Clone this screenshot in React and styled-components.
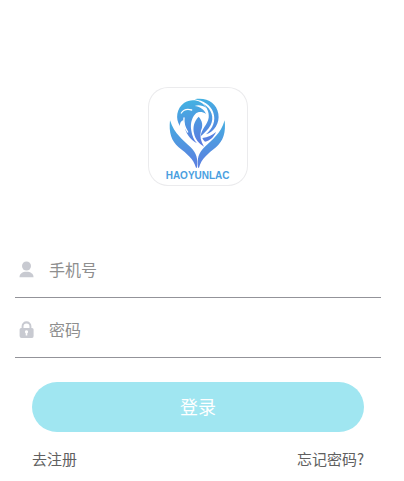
import React from "react";
import styled, { createGlobalStyle } from "styled-components";

const GlobalStyle = createGlobalStyle`
  * {
    box-sizing: border-box;
  }
  body {
    margin: 0;
    background-color: #fff;
    font-family: "Noto Sans CJK SC", sans-serif;
  }
`;

function Logo() {
  return (
    <LogoSvg viewBox="24 21 297 297" role="img" aria-label="HAOYUNLAC">
      <defs>
        <linearGradient id="wing" gradientUnits="userSpaceOnUse" x1="0" y1="120" x2="0" y2="262">
          <stop offset="0" stopColor="#45aee0" />
          <stop offset="1" stopColor="#5c7ee0" />
        </linearGradient>
        <linearGradient id="bird" gradientUnits="userSpaceOnUse" x1="50" y1="10" x2="75" y2="150">
          <stop offset="0" stopColor="#43b3e2" />
          <stop offset="1" stopColor="#5b78df" />
        </linearGradient>
      </defs>
      <g fill="url(#wing)">
        <path d="M90 121C86 158 94 183 116 202C142 223 160 236 168 263L171 263C174 236 170 220 152 202C128 178 104 164 90 121Z" />
        <path d="M254 121C258 158 250 183 228 202C202 223 185 236 177 263L174 263C171 236 175 220 193 202C217 178 241 164 254 121Z" />
      </g>
      <g fill="url(#bird)" transform="translate(102 48)">
        <path d="M18 90C3 68 8 37 30 21C53 6 82 12 98 36C86 28 72 26 62 30C77 32 90 40 96 54C85 46 72 46 64 54C51 68 49 88 52 104C54 119 60 132 69 142C48 130 34 111 32 89L28 72C21 75 17 81 18 90Z" />
        <path d="M62 10C98 3 128 22 133 53C138 82 120 107 96 115C117 97 126 73 118 50C110 27 88 14 62 10Z" />
        <path d="M88 23C114 39 121 65 110 87C103 101 91 110 80 121C82 98 101 86 104 65C106 48 99 35 88 23Z" />
        <path d="M74 62C60 76 56 94 60 112C64 131 74 142 90 152C80 136 77 121 81 103C88 89 85 74 74 62Z" />
        <path d="M85 126C102 124 114 118 126 108C119 124 108 134 93 137C89 134 87 130 85 126Z" />
      </g>
      <g fill="none" stroke="#fff" strokeWidth="4" strokeLinecap="round">
        <path d="M124 99C130 90 142 86 155 90" />
        <path d="M132 114C130 128 135 144 143 156" />
      </g>
      <LogoText x="77" y="296">HAOYUNLAC</LogoText>
    </LogoSvg>
  );
}

function UserIcon() {
  return (
    <FieldIcon viewBox="0 0 18 18" aria-hidden="true">
      <ellipse cx="9.5" cy="6" rx="4.5" ry="4.6" />
      <path d="M2.5 17.2C2.5 13.7 5.3 11.8 9.5 11.8S16.5 13.7 16.5 17.2Z" />
    </FieldIcon>
  );
}

function LockIcon() {
  return (
    <FieldIcon viewBox="0 0 18 18" aria-hidden="true">
      <path
        fillRule="evenodd"
        d="M4.6 8V6.2a4.9 4.9 0 0 1 9.8 0V8h.6A1.6 1.6 0 0 1 16.6 9.6v6.4a2 2 0 0 1-2 2H4.6a2 2 0 0 1-2-2V9.6A1.6 1.6 0 0 1 4.2 8ZM6.5 8h6V6.4a3 3 0 0 0-6 0ZM9.5 10.2a1.6 1.6 0 0 0-.8 3v2.2h1.6v-2.2A1.6 1.6 0 0 0 9.5 10.2Z"
      />
    </FieldIcon>
  );
}

export default function App() {
  return (
    <Page>
      <GlobalStyle />
      <LogoBox>
        <Logo />
      </LogoBox>
      <Form onSubmit={(e) => e.preventDefault()}>
        <Field>
          <UserIcon />
          <Input type="tel" placeholder="手机号" aria-label="手机号" />
        </Field>
        <Field>
          <LockIcon />
          <Input type="password" placeholder="密码" aria-label="密码" />
        </Field>
        <Actions>
          <LoginButton type="submit">登录</LoginButton>
          <Links>
            <TextLink href="#register">去注册</TextLink>
            <TextLink href="#forgot">忘记密码?</TextLink>
          </Links>
        </Actions>
      </Form>
    </Page>
  );
}

const Page = styled.main`
  display: flex;
  flex-direction: column;
  align-items: center;
  padding: 87px 23px 8px 15px;
`;

const LogoBox = styled.div`
  width: 100px;
  height: 99px;
  padding-right: 1px;
  border-radius: 20px;
  box-shadow: inset 0 0 0 1px #ebebed;
`;

const LogoSvg = styled.svg`
  display: block;
  width: 100%;
  height: 100%;
`;

const LogoText = styled.text`
  font-family: "Liberation Sans", sans-serif;
  font-size: 30px;
  font-weight: bold;
  fill: #4b9fdf;
`;

const Form = styled.form`
  width: 100%;
  padding-top: 52px;
`;

const Field = styled.label`
  display: flex;
  align-items: center;
  gap: 14px;
  height: 60px;
  padding-top: 3px;
  padding-left: 2px;
  border-bottom: 1px solid #939399;
`;

const FieldIcon = styled.svg`
  flex: none;
  width: 18px;
  height: 18px;
  fill: #c8cad1;
`;

const Input = styled.input`
  flex: 1;
  min-width: 0;
  height: 24px;
  padding: 0;
  border: 0;
  outline: 0;
  background: none;
  font-family: inherit;
  font-size: 16px;
  color: #333;

  &::placeholder {
    color: #8e8e8e;
    opacity: 1;
  }
`;

const Actions = styled.div`
  padding: 24px 17px 0;
`;

const LoginButton = styled.button`
  display: block;
  width: 100%;
  height: 50px;
  padding: 0 0 2px;
  border: 0;
  border-radius: 25px;
  background-color: #a0e6f1;
  color: #fff;
  font-family: inherit;
  font-size: 18px;
  cursor: pointer;
`;

const Links = styled.div`
  display: flex;
  justify-content: space-between;
  padding-top: 16px;
`;

const TextLink = styled.a`
  font-size: 15px;
  line-height: 22px;
  color: #606060;
  text-decoration: none;
`;
